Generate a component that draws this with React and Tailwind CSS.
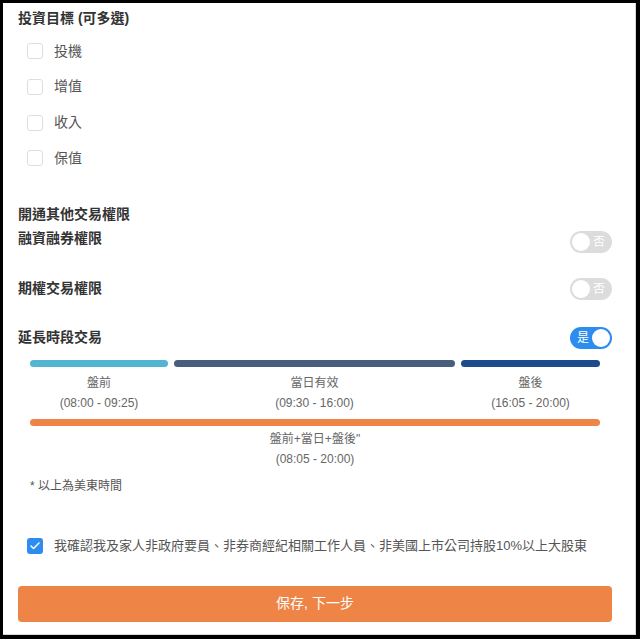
import React from 'react';
import { Check } from 'lucide-react';

const goals = ['投機', '增值', '收入', '保值'];

const Toggle = ({ on }) =>
  on ? (
    <div className="w-[42px] h-[22px] rounded-full bg-[#2d8cf0] flex items-center justify-between pl-[7px] pr-[2px]">
      <span className="text-white text-[12px] leading-none">是</span>
      <span className="w-[18px] h-[18px] rounded-full bg-white" />
    </div>
  ) : (
    <div className="w-[42px] h-[22px] rounded-full bg-[#dcdcdc] flex items-center justify-between pl-[2px] pr-[7px]">
      <span className="w-[18px] h-[18px] rounded-full bg-white" />
      <span className="text-white text-[12px] leading-none">否</span>
    </div>
  );

const App = () => {
  return (
    <div
      className="w-[640px] h-[639px] bg-black pt-[3px] pl-[3px] pr-[4px] pb-[4px]"
      style={{ fontFamily: '"Liberation Sans", "Noto Sans CJK TC", sans-serif' }}
    >
      <div className="w-full h-full bg-white border-r border-b border-[#d8d8d8] flex flex-col px-[15px] text-[#333]">
        {/* Investment goals */}
        <h2 className="mt-[6px] text-[14px] font-bold leading-[18px]">投資目標 (可多選)</h2>
        <div className="flex flex-col mt-[16px] gap-[19.8px] pl-[9px]">
          {goals.map((g) => (
            <div key={g} className="flex items-center h-[16px]">
              <span className="w-[16px] h-[16px] rounded-[3px] border border-[#dcdee2] bg-white" />
              <span className="ml-[11px] text-[14px] text-[#555]">{g}</span>
            </div>
          ))}
        </div>

        {/* Other permissions */}
        <h2 className="mt-[39px] text-[14px] font-bold leading-[18px]">開通其他交易權限</h2>
        <div className="flex items-center justify-between mt-[5px] h-[24px]">
          <span className="text-[14px] font-bold text-[#333] -mt-[4px]">融資融券權限</span>
          <div className="mr-[8px] mt-[4px]"><Toggle on={false} /></div>
        </div>
        <div className="flex items-center justify-between mt-[24px] h-[24px]">
          <span className="text-[14px] font-bold text-[#333]">期權交易權限</span>
          <div className="mr-[8px] mt-[2px]"><Toggle on={false} /></div>
        </div>
        <div className="flex items-center justify-between mt-[25px] h-[24px]">
          <span className="text-[14px] font-bold text-[#333]">延長時段交易</span>
          <div className="mr-[8px] mt-[2px]"><Toggle on /></div>
        </div>

        {/* Timeline */}
        <div className="w-[570px] ml-[12px] mt-[11px] text-[12px] text-[#666]">
          <div className="flex gap-[6px]">
            <div className="w-[138px] flex flex-col items-center">
              <div className="w-full h-[7px] rounded-full bg-[#53b5d0]" />
              <span className="mt-[6px] leading-[20px]">盤前</span>
              <span className="leading-[20px]">(08:00 - 09:25)</span>
            </div>
            <div className="w-[281px] flex flex-col items-center">
              <div className="w-full h-[7px] rounded-full bg-[#475e7e]" />
              <span className="mt-[6px] leading-[20px]">當日有效</span>
              <span className="leading-[20px]">(09:30 - 16:00)</span>
            </div>
            <div className="w-[139px] flex flex-col items-center">
              <div className="w-full h-[7px] rounded-full bg-[#1f4a8c]" />
              <span className="mt-[6px] leading-[20px]">盤後</span>
              <span className="leading-[20px]">(16:05 - 20:00)</span>
            </div>
          </div>
          <div className="flex flex-col items-center mt-[6px]">
            <div className="w-full h-[7px] rounded-full bg-[#ef8447]" />
            <span className="mt-[3px] leading-[20px]">盤前+當日+盤後"</span>
            <span className="leading-[20px]">(08:05 - 20:00)</span>
          </div>
          <p className="mt-[7px] leading-[20px] text-[#555]">* 以上為美東時間</p>
        </div>

        {/* Confirmation */}
        <div className="flex items-center mt-[40px] pl-[9px]">
          <span className="w-[16px] h-[16px] rounded-[3px] bg-[#2d8cf0] flex items-center justify-center">
            <Check size={12} strokeWidth={3} color="#fff" />
          </span>
          <span className="ml-[11px] text-[13px] text-[#555]">
            我確認我及家人非政府要員、非券商經紀相關工作人員、非美國上市公司持股10%以上大股東
          </span>
        </div>

        <button className="mt-[30px] h-[36px] w-[594px] rounded-[4px] bg-[#ef8447] text-white text-[14px]">
          保存, 下一步
        </button>
      </div>
    </div>
  );
};

export default App;
